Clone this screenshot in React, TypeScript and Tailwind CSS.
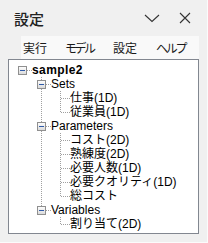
import React from 'react';

type Node = { label: string; bold?: boolean; children?: Node[] };

const tree: Node[] = [
  {
    label: 'sample2',
    bold: true,
    children: [
      { label: 'Sets', children: [{ label: '仕事(1D)' }, { label: '従業員(1D)' }] },
      {
        label: 'Parameters',
        children: [
          { label: 'コスト(2D)' },
          { label: '熟練度(2D)' },
          { label: '必要人数(1D)' },
          { label: '必要クオリティ(1D)' },
          { label: '総コスト' },
        ],
      },
      { label: 'Variables', children: [{ label: '割り当て(2D)' }] },
    ],
  },
];

type Row = {
  node: Node;
  level: number;
  last: boolean;
  hasParent: boolean;
  open: boolean[]; // for each ancestor column: does that ancestor have a next sibling
};

function flatten(nodes: Node[], level: number, open: boolean[], hasParent: boolean, out: Row[]) {
  nodes.forEach((n, i) => {
    const last = i === nodes.length - 1;
    out.push({ node: n, level, last, hasParent, open });
    if (n.children) flatten(n.children, level + 1, [...open, !last], true, out);
  });
  return out;
}

const rows = flatten(tree, 0, [], false, []);

const DOT = '#a0a0a0';

function Cell({ top, bottom, across, expander }: { top?: boolean; bottom?: boolean; across?: boolean; expander?: boolean }) {
  return (
    <svg width="19" height="14" className="shrink-0 block" shapeRendering="crispEdges">
      {top && <line x1="9.5" y1="0" x2="9.5" y2="7" stroke={DOT} strokeDasharray="1 1" />}
      {bottom && <line x1="9.5" y1="8" x2="9.5" y2="14" stroke={DOT} strokeDasharray="1 1" />}
      {across && <line x1="10" y1="7.5" x2="19" y2="7.5" stroke={DOT} strokeDasharray="1 1" />}
      {expander && (
        <>
          <defs>
            <linearGradient id="exp" x1="0" y1="0" x2="0" y2="1">
              <stop offset="0" stopColor="#ffffff" />
              <stop offset="1" stopColor="#d8d8d8" />
            </linearGradient>
          </defs>
          <rect x="5.5" y="3.5" width="8" height="8" fill="url(#exp)" stroke="#8f8f8f" />
          <rect x="7" y="7" width="5" height="1" fill="#2f5aa8" />
        </>
      )}
    </svg>
  );
}

function TreeRow({ row }: { row: Row }) {
  const cols = row.open.map((o, i) => <Cell key={i} top={o} bottom={o} />);
  return (
    <div className="flex h-[14px] items-center">
      {cols}
      <Cell
        top={row.hasParent}
        bottom={!row.last && row.hasParent}
        across
        expander={!!row.node.children}
      />
      <span
        className={`whitespace-nowrap leading-[14px] text-[12px] text-black ${row.node.bold ? 'font-bold tracking-[0.4px]' : ''}`}
      >
        {row.node.label}
      </span>
    </div>
  );
}

export default function App() {
  return (
    <div
      className="w-[208px] h-[243px] bg-[#f0f0f0] flex flex-col overflow-hidden border-r border-b border-r-[#fbfbfb] border-b-[#fbfbfb] [font-family:'Liberation_Sans','Noto_Sans_CJK_JP',sans-serif]"
    >
      {/* Title bar */}
      <div className="h-[36px] shrink-0 flex items-center pl-[14px] pr-[16px]">
        <span className="text-[15px] leading-none font-medium text-[#222] [font-family:'Noto_Sans_CJK_JP',sans-serif] pt-[1px]">
          設定
        </span>
        <div className="ml-auto flex items-center gap-[19px]">
          <svg width="16" height="10" viewBox="0 0 16 10">
            <path d="M1 2 L8 8.5 L15 2" fill="none" stroke="#333" strokeWidth="1.1" />
          </svg>
          <svg width="12" height="12" viewBox="0 0 12 12">
            <path d="M1 1 L11 11 M11 1 L1 11" fill="none" stroke="#333" strokeWidth="1.1" />
          </svg>
        </div>
      </div>

      {/* Menu bar */}
      <ul className="ml-[21px] mr-[8px] h-[23px] shrink-0 bg-[#f9f9f9] flex items-center pl-[2px] text-[12px] text-[#1a1a1a] [font-family:'Noto_Sans_CJK_JP',sans-serif]">
        <li className="w-[42px]">実行</li>
        <li className="w-[48px] tracking-[-2.5px]">モデル</li>
        <li className="w-[43px]">設定</li>
        <li className="tracking-[-2.3px]">ヘルプ</li>
      </ul>

      {/* Tree */}
      <div className="mx-[8px] mb-[8px] flex-1 bg-white border border-[#828790] pt-[3px] pl-[4px] overflow-hidden">
        {rows.map((r, i) => (
          <TreeRow key={i} row={r} />
        ))}
      </div>
    </div>
  );
}
